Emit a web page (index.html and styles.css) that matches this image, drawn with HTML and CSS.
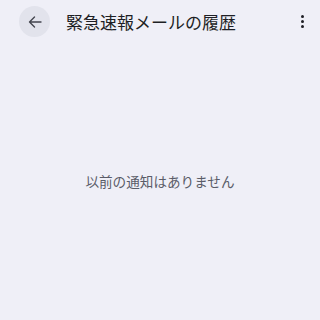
FILE: index.html
```html
<!DOCTYPE html>
<html lang="ja">
<head>
    <meta charset="UTF-8">
    <meta name="viewport" content="width=device-width, initial-scale=1.0">
    <link rel="stylesheet" href="styles.css">
    <title>緊急速報メールの履歴</title>
</head>
<body>

    <div class="top-bar">
        <button class="back">
            <svg width="16" height="16" viewBox="0 0 16 16">
                <path d="M14 8H2.5M7.5 3L2.5 8l5 5" fill="none" stroke="#44464f" stroke-width="1.4" stroke-linecap="round" stroke-linejoin="round"/>
            </svg>
        </button>
        <div class="title">緊急速報メールの履歴</div>
        <div class="menu">
            <span class="dot"></span>
            <span class="dot"></span>
            <span class="dot"></span>
        </div>
    </div>

    <div class="empty">
        <div class="message">以前の通知はありません</div>
    </div>

</body>
</html>
```

FILE: styles.css
```css
body {
    margin: 0;
    height: 100vh;
    display: flex;
    flex-direction: column;
    background-color: #efeff7;
    font-family: "Noto Sans CJK JP", "Noto Sans", sans-serif;
}

.top-bar {
    display: flex;
    align-items: center;
    height: 42px;
    padding: 0 0 0 19px;
}

.back {
    display: flex;
    align-items: center;
    justify-content: center;
    width: 31px;
    height: 31px;
    padding: 0;
    border: none;
    border-radius: 50%;
    background-color: #e2e3ec;
    margin-top: 1px;
}

.title {
    flex: 1;
    margin-left: 16px;
    font-size: 17px;
    color: #1e1f25;
    line-height: 1;
}

.menu {
    display: flex;
    flex-direction: column;
    align-items: center;
    gap: 2px;
    width: 36px;
}

.dot {
    width: 3px;
    height: 3px;
    border-radius: 50%;
    background-color: #1e1f25;
}

.empty {
    flex: 1;
    display: flex;
    justify-content: center;
    align-items: center;
}

.message {
    font-size: 13.6px;
    color: #5a5c68;
}
```
